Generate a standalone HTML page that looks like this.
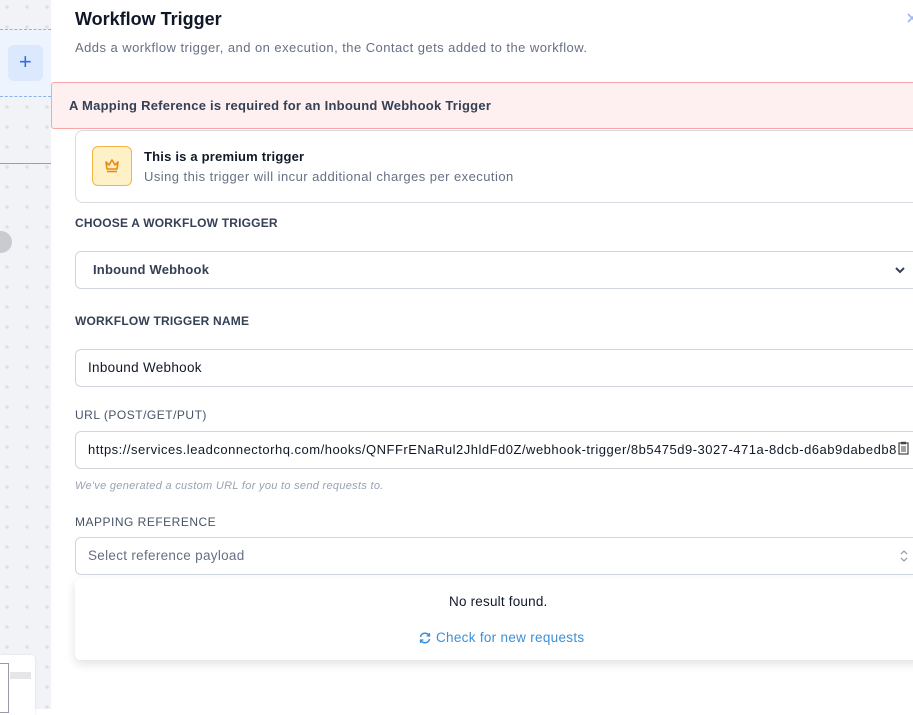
<!DOCTYPE html><html><head><style>
*{box-sizing:border-box;margin:0;padding:0}
body{width:913px;height:709px;overflow:hidden;font-family:"Liberation Sans",sans-serif;background:#fff;position:relative;color:#101828;letter-spacing:.45px}
.left{position:absolute;left:0;top:0;width:51px;height:709px;background:#f2f3f7;background-image:radial-gradient(circle,#dfe1e7 1.6px,transparent 2px);background-size:20px 20px;background-position:-3px -3px}
.a{position:absolute}
.lbl{position:absolute;left:75px;font-size:12px;font-weight:bold;color:#344054;letter-spacing:.2px}
.inp{position:absolute;left:75px;width:850px;height:38px;border:1px solid #d0d5dd;border-radius:6px;background:#fff;font-size:14px;padding-left:12px;line-height:36px;color:#101828}
</style></head><body>
<div class="left"></div>
<div class="a" style="left:0;top:29px;width:51px;height:68px;background:#eef4fd;border-top:1px dashed #8fb0ef;border-bottom:1px dashed #8fb0ef"></div>
<div class="a" style="left:8px;top:45px;width:35px;height:36px;background:#dbe8fd;border-radius:6px;color:#2f6ee8;font-size:22px;text-align:center;line-height:34px">+</div>
<div class="a" style="left:0;top:163px;width:51px;height:1px;background:#9a9ea8"></div>
<div class="a" style="left:-10px;top:231px;width:22px;height:22px;border-radius:50%;background:#c9cbd1"></div>
<div class="a" style="left:0;top:655px;width:35px;height:60px;background:#fff;border-radius:0 4px 0 0;box-shadow:0 0 2px #ddd"></div>
<div class="a" style="left:0;top:663px;width:9px;height:50px;border:1px solid #99a;border-left:none"></div>
<div class="a" style="left:10px;top:672px;width:21px;height:7px;background:#e6e6e8"></div>

<div class="a" style="left:75px;top:9px;font-size:18px;font-weight:bold;color:#101828;letter-spacing:0">Workflow Trigger</div>
<div class="a" style="left:75px;top:40px;font-size:13px;color:#667085">Adds a workflow trigger, and on execution, the Contact gets added to the workflow.</div>
<svg class="a" style="left:906px;top:12px" width="10" height="12" viewBox="0 0 10 12"><path d="M2 2l8 8M10 2l-8 8" stroke="#9fb4f5" stroke-width="1.6"/></svg>
<div class="a" style="left:51px;top:82px;width:870px;height:47px;background:#fef0f0;border:1px solid #f8a6a6;border-radius:3px;font-size:13px;font-weight:bold;color:#344054;padding-left:17px;line-height:45px;letter-spacing:.25px">A Mapping Reference is required for an Inbound Webhook Trigger</div>
<div class="a" style="left:75px;top:130px;width:850px;height:73px;border:1px solid #d8dbe2;border-radius:8px"></div>
<div class="a" style="left:92px;top:146px;width:40px;height:40px;background:#fef0c7;border:1px solid #f5b544;border-radius:6px">
<svg width="38" height="38" viewBox="0 0 38 38"><path d="M13 15l3 3 3-5 3 5 3-3-1 7H14z" fill="none" stroke="#e98a12" stroke-width="1.6" stroke-linejoin="round"/><path d="M14 24.5h10" stroke="#e98a12" stroke-width="1.6"/></svg></div>
<div class="a" style="left:144px;top:149px;font-size:13px;font-weight:bold;color:#101828;letter-spacing:.2px">This is a premium trigger</div>
<div class="a" style="left:144px;top:169px;font-size:13px;color:#667085">Using this trigger will incur additional charges per execution</div>

<div class="lbl" style="top:216px">CHOOSE A WORKFLOW TRIGGER</div>
<div class="inp" style="top:251px;padding-left:17px;font-weight:bold;font-size:13px;color:#344054;letter-spacing:.2px">Inbound Webhook</div>
<svg class="a" style="left:894px;top:264px" width="12" height="12" viewBox="0 0 12 12"><path d="M2 4l4 4 4-4" fill="none" stroke="#344054" stroke-width="2"/></svg>
<div class="lbl" style="top:314px">WORKFLOW TRIGGER NAME</div>
<div class="inp" style="top:349px;font-size:13.5px;letter-spacing:.3px">Inbound Webhook</div>
<div class="lbl" style="top:408px;font-weight:normal;color:#475467;letter-spacing:.5px">URL (POST/GET/PUT)</div>
<div class="inp" style="top:431px;font-size:13px;white-space:nowrap;overflow:hidden;letter-spacing:.5px">https://services.leadconnectorhq.com/hooks/QNFFrENaRul2JhldFd0Z/webhook-trigger/8b5475d9-3027-471a-8dcb-d6ab9dabedb8</div>
<svg class="a" style="left:898px;top:441px" width="11" height="14" viewBox="0 0 11 14"><rect x="1" y="2" width="9" height="11" fill="none" stroke="#444" stroke-width="1.2"/><rect x="3" y="0.8" width="5" height="2.5" fill="#444"/><path d="M3 6h5M3 8h5M3 10h5" stroke="#444"/></svg>
<div class="a" style="left:75px;top:480px;font-size:11px;font-style:italic;color:#98a2b3;letter-spacing:.3px">We've generated a custom URL for you to send requests to.</div>
<div class="lbl" style="top:515px;font-weight:normal;color:#475467;letter-spacing:.5px">MAPPING REFERENCE</div>
<div class="inp" style="top:537px;font-size:13.5px;color:#667085;letter-spacing:.3px">Select reference payload</div>
<svg class="a" style="left:898px;top:548px" width="12" height="16" viewBox="0 0 12 16"><path d="M3 6l3-3 3 3M3 10l3 3 3-3" fill="none" stroke="#98a2b3" stroke-width="1.3"/></svg>
<div class="a" style="left:75px;top:578px;width:850px;height:82px;background:#fff;border-radius:6px;box-shadow:0 4px 10px rgba(0,0,0,.12)"></div>
<div class="a" style="left:449px;top:594px;font-size:13.5px;color:#101828;letter-spacing:.2px">No result found.</div>
<svg class="a" style="left:418px;top:631px" width="14" height="14" viewBox="0 0 14 14"><path d="M2.5 6A4.6 4.6 0 0 1 11 4.5M11.5 8A4.6 4.6 0 0 1 3 9.5" fill="none" stroke="#3d8fd6" stroke-width="1.5"/><path d="M11.5 2v3h-3M2.5 12V9h3" fill="none" stroke="#3d8fd6" stroke-width="1.3"/></svg>
<div class="a" style="left:436px;top:630px;font-size:13.5px;color:#3d8fd6;letter-spacing:.3px">Check for new requests</div>
</body></html>
